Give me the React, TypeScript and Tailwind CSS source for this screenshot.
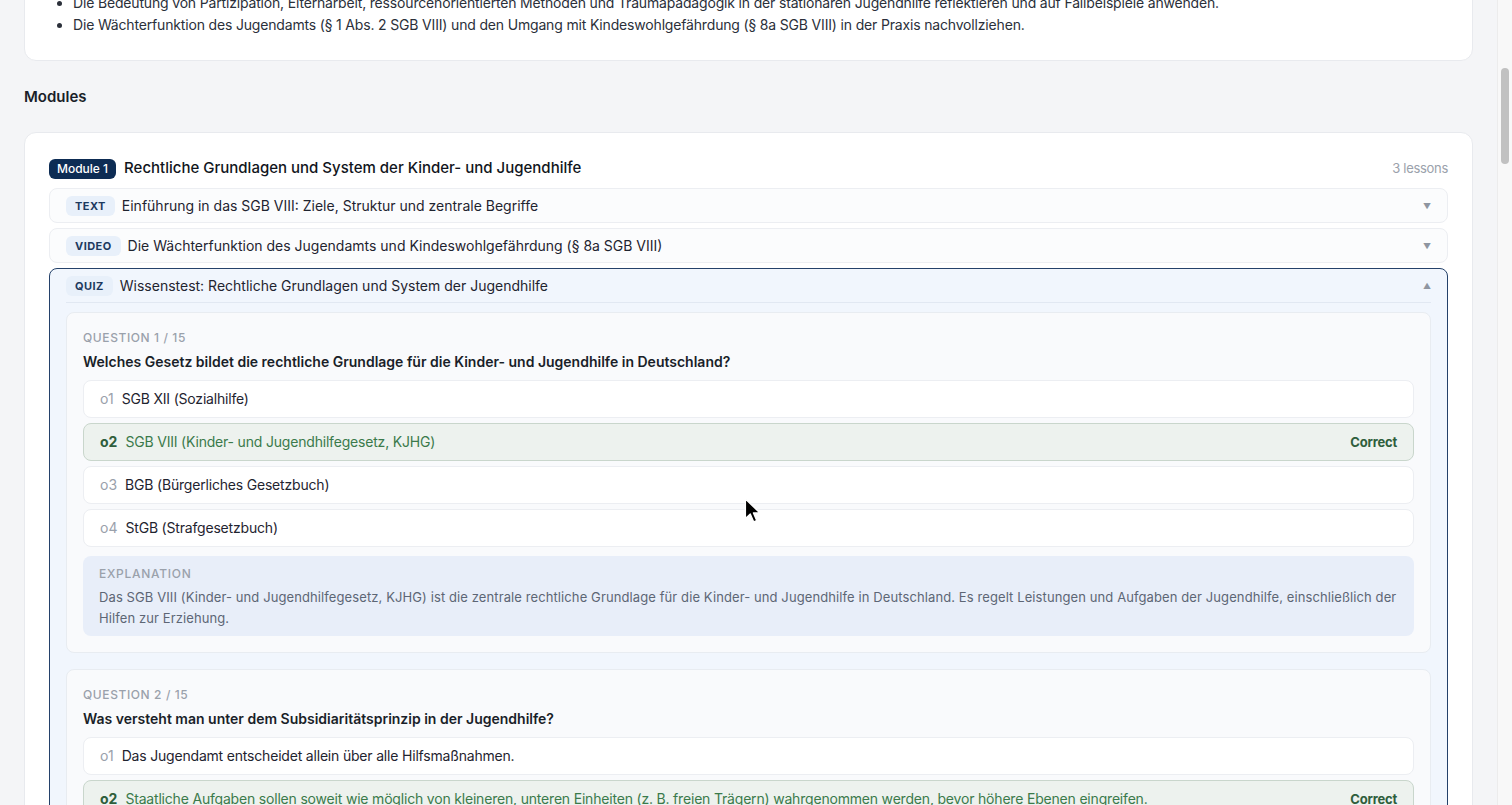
import React from "react";

type Opt = { id: string; text: string; correct?: boolean };

const q1: Opt[] = [
  { id: "o1", text: "SGB XII (Sozialhilfe)" },
  { id: "o2", text: "SGB VIII (Kinder- und Jugendhilfegesetz, KJHG)", correct: true },
  { id: "o3", text: "BGB (Bürgerliches Gesetzbuch)" },
  { id: "o4", text: "StGB (Strafgesetzbuch)" },
];

const q2: Opt[] = [
  { id: "o1", text: "Das Jugendamt entscheidet allein über alle Hilfsmaßnahmen." },
  {
    id: "o2",
    text: "Staatliche Aufgaben sollen soweit wie möglich von kleineren, unteren Einheiten (z. B. freien Trägern) wahrgenommen werden, bevor höhere Ebenen eingreifen.",
    correct: true,
  },
  { id: "o3", text: "Die Eltern tragen keine Verantwortung für die Erziehung ihrer Kinder." },
  { id: "o4", text: "Nur private Träger dürfen Leistungen der Jugendhilfe erbringen." },
];

function Option({ o }: { o: Opt }) {
  if (o.correct) {
    return (
      <div className="flex items-center rounded-lg border border-[#c9d6cc] bg-[#edf2ee] px-4 py-[8px] text-[14px] leading-5">
        <span className="mr-2 font-bold text-[#2f5e3c]">{o.id}</span>
        <span className="flex-1 tracking-[-0.19px] text-[#3b7a4b]">{o.text}</span>
        <span className="text-[13px] font-bold tracking-[-0.2px] text-[#2f5e3c]">Correct</span>
      </div>
    );
  }
  return (
    <div className="flex items-center rounded-lg border border-[#eceef2] bg-white px-4 py-[8px] text-[14px] leading-5">
      <span className="mr-2 text-[#9aa1ab]">{o.id}</span>
      <span className="flex-1 tracking-[-0.19px] text-[#1f2430]">{o.text}</span>
    </div>
  );
}

function Question({
  n,
  q,
  opts,
  explanation,
}: {
  n: number;
  q: string;
  opts: Opt[];
  explanation?: string;
}) {
  return (
    <div className="rounded-lg border border-[#e8ecf1] bg-[#f9fafc] p-4">
      <div className="pt-px text-[12px] font-medium leading-4 tracking-[0.05em] text-[#9aa1ab]">
        QUESTION {n} / 15
      </div>
      <div className="mt-[6px] text-[14px] font-semibold leading-5 text-[#1a1f29]">{q}</div>
      <div className="mt-[8px] flex flex-col gap-[5px]">
        {opts.map((o) => (
          <Option key={o.id} o={o} />
        ))}
      </div>
      {explanation && (
        <div className="mt-[9px] rounded-lg bg-[#e8eef9] px-4 pt-[10px] pb-[7px]">
          <div className="text-[12px] font-medium leading-4 tracking-[0.06em] text-[#9aa1ab]">
            EXPLANATION
          </div>
          <div className="mt-[5px] text-[13px] leading-[21px] tracking-[0.1px] text-[#5d6675]">{explanation}</div>
        </div>
      )}
    </div>
  );
}

function TypeBadge({ t }: { t: string }) {
  return (
    <span className="rounded-md bg-[#e8f0fa] px-[9px] py-[2px] text-[11px] font-bold leading-4 tracking-[0.04em] text-[#1d3a5f]">
      {t}
    </span>
  );
}

function LessonRow({ t, title }: { t: string; title: string }) {
  return (
    <div className="flex h-[35px] items-center gap-[7px] rounded-lg border border-[#eceef2] bg-[#fbfcfd] px-4">
      <TypeBadge t={t} />
      <span className="flex-1 text-[14px] text-[#1f2430]">{title}</span>
      <span className="text-[8px] text-[#8f96a1]">▼</span>
    </div>
  );
}

export default function App() {
  return (
    <div className="relative flex h-[805px] w-full overflow-hidden bg-[#f4f5f7] font-['Inter','Noto_Sans',sans-serif]">
      <main className="flex-1 overflow-hidden px-6">
        {/* Objectives card (scrolled) */}
        <div className="mt-[-33px] rounded-xl border border-[#e8eaee] bg-white px-6 py-6">
          <ul className="list-disc pl-6 text-[14px] leading-[22px] tracking-[-0.17px] text-[#2b303a] marker:text-[#2b303a]">
            <li>
              Die Bedeutung von Partizipation, Elternarbeit, ressourcenorientierten Methoden und Traumapädagogik in der
              stationären Jugendhilfe reflektieren und auf Fallbeispiele anwenden.
            </li>
            <li>
              Die Wächterfunktion des Jugendamts (§ 1 Abs. 2 SGB VIII) und den Umgang mit Kindeswohlgefährdung (§ 8a SGB
              VIII) in der Praxis nachvollziehen.
            </li>
          </ul>
        </div>

        <h2 className="mt-[24px] mb-[23px] text-[15px] font-semibold leading-6 text-[#1a1f29]">Modules</h2>

        <div className="rounded-xl border border-[#e8eaee] bg-white p-6">
          <div className="flex h-[23px] items-center gap-2">
            <span className="rounded-md bg-[#0d2c54] px-2 py-[2px] text-[12px] font-medium leading-4 text-white">
              Module 1
            </span>
            <span className="flex-1 text-[15px] font-medium text-[#111520]">
              Rechtliche Grundlagen und System der Kinder- und Jugendhilfe
            </span>
            <span className="text-[13px] tracking-[-0.3px] text-[#9aa1ab]">3 lessons</span>
          </div>

          <div className="mt-[8px] flex flex-col gap-[5px]">
            <LessonRow t="TEXT" title="Einführung in das SGB VIII: Ziele, Struktur und zentrale Begriffe" />
            <LessonRow t="VIDEO" title="Die Wächterfunktion des Jugendamts und Kindeswohlgefährdung (§ 8a SGB VIII)" />

            <div className="rounded-lg border border-[#24416a] bg-[#f1f6fd]">
              <div className="mx-4 flex h-[34px] items-center gap-[7px] border-b border-[#e1e8f2]">
                <TypeBadge t="QUIZ" />
                <span className="flex-1 text-[14px] text-[#1f2430]">
                  Wissenstest: Rechtliche Grundlagen und System der Jugendhilfe
                </span>
                <span className="text-[8px] text-[#8f96a1]">▲</span>
              </div>
              <div className="flex flex-col gap-4 px-4 pb-4 pt-[9px]">
                <Question
                  n={1}
                  q="Welches Gesetz bildet die rechtliche Grundlage für die Kinder- und Jugendhilfe in Deutschland?"
                  opts={q1}
                  explanation="Das SGB VIII (Kinder- und Jugendhilfegesetz, KJHG) ist die zentrale rechtliche Grundlage für die Kinder- und Jugendhilfe in Deutschland. Es regelt Leistungen und Aufgaben der Jugendhilfe, einschließlich der Hilfen zur Erziehung."
                />
                <Question
                  n={2}
                  q="Was versteht man unter dem Subsidiaritätsprinzip in der Jugendhilfe?"
                  opts={q2}
                  explanation="Das Subsidiaritätsprinzip besagt, dass freie Träger Vorrang vor öffentlichen Trägern haben."
                />
              </div>
            </div>
          </div>
        </div>
      </main>

      {/* scrollbar */}
      <div className="w-[15px] shrink-0 border-l border-[#ececec] bg-[#f8f8f8]">
        <div className="mx-auto mt-[68px] h-[96px] w-[8px] rounded-full bg-[#c1c1c1]" />
      </div>

      {/* mouse cursor */}
      <svg className="absolute left-[744px] top-[498px]" width="18" height="26" viewBox="0 0 16 24">
        <path d="M1 1 L1 19 L5.5 14.8 L8.6 22 L11.4 20.8 L8.4 13.8 L14.2 13.6 Z" fill="#000" stroke="#fff" strokeWidth="1.2" strokeLinejoin="round" />
      </svg>
    </div>
  );
}
